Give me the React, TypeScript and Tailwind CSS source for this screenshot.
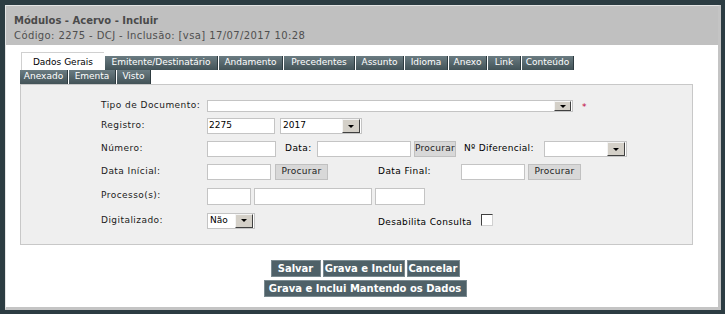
import React from "react";

const font = { fontFamily: '"DejaVu Sans", Verdana, sans-serif' };

function Tab({ label, w, active }: { label: string; w: number; active?: boolean }) {
  if (active) {
    return (
      <div
        className="h-[18px] -mt-[4px] flex items-center justify-center pt-[2px] text-[9px] text-black bg-white border-t border-l border-[#d0d0d0]"
        style={{ width: w }}
      >
        {label}
      </div>
    );
  }
  return (
    <div
      className="h-[14px] flex items-center justify-center text-[9px] text-white bg-gradient-to-b from-[#6b7c82] to-[#435358] border-r border-[#2e3b40]"
      style={{ width: w }}
    >
      {label}
    </div>
  );
}

function Input({ w, value }: { w: number; value?: string }) {
  return (
    <div
      className="h-[16px] bg-white border border-[#c4c4c4] text-[9px] flex items-center pl-[1px] text-black"
      style={{ width: w }}
    >
      {value}
    </div>
  );
}

function DropBtn({ big }: { big?: boolean }) {
  return (
    <div
      className={`${big ? "w-[18px] h-[14px]" : "w-[17px] h-[10px]"} bg-[#d4d0c8] border border-t-[#f4f4f4] border-l-[#f4f4f4] border-r-[#404040] border-b-[#404040] flex items-center justify-center`}
    >
      <div className="w-0 h-0 border-l-[3px] border-r-[3px] border-t-[3px] border-l-transparent border-r-transparent border-t-black" />
    </div>
  );
}

function Select({ w, value, h = 16 }: { w: number; value?: string; h?: number }) {
  return (
    <div
      className="bg-white border border-[#c4c4c4] flex items-center justify-between pl-[2px] pr-[1px] text-[9px] text-black"
      style={{ width: w, height: h }}
    >
      <span>{value}</span>
      <DropBtn big={h > 13} />
    </div>
  );
}

function Btn({ label, w }: { label: string; w: number }) {
  return (
    <div
      className="h-[16px] bg-[#d8d8d8] border border-[#c0c0c0] text-[9px] text-[#222] tracking-[0.3px] flex items-center justify-center overflow-hidden whitespace-nowrap"
      style={{ width: w }}
    >
      {label}
    </div>
  );
}

function Label({ children, w = 106 }: { children: React.ReactNode; w?: number }) {
  return (
    <div className="text-[9px] text-[#1a1a1a] tracking-[0.45px] -mt-[1px] shrink-0" style={{ width: w }}>
      {children}
    </div>
  );
}

function ActionBtn({ label, w }: { label: string; w: number }) {
  return (
    <div
      className="h-[17px] bg-[#4f6168] border border-[#7a8a90] text-white font-bold text-[10px] flex items-center justify-center whitespace-nowrap"
      style={{ width: w }}
    >
      {label}
    </div>
  );
}

export default function App() {
  return (
    <div className="w-[725px] h-[314px] bg-[#2c3c42] pt-[5px] pl-[5px] pr-[4px] pb-[4px]" style={font}>
      <div className="w-full h-full bg-white border-t border-l border-[#e4e4e4] border-r-[3px] border-b-[3px] border-r-[#c4c4c4] border-b-[#c4c4c4] flex flex-col">
        <div className="h-[39px] bg-[#c0c0c0] pl-[8px] pt-[8px] flex flex-col gap-[2px]">
          <div className="text-[10px] font-bold text-[#4a4a4a] leading-[13px]">Módulos - Acervo - Incluir</div>
          <div className="text-[10px] text-[#4f4f4f] leading-[13px] tracking-[0.4px]">
            Código: 2275 - DCJ - Inclusão: [vsa] 17/07/2017 10:28
          </div>
        </div>
        <div className="pl-[14px] pt-[11px] flex flex-col">
          <div className="flex gap-[1px] pl-[1px] items-end h-[14px]">
            <Tab label="Dados Gerais" w={83} active />
            <Tab label="Emitente/Destinatário" w={113} />
            <Tab label="Andamento" w={64} />
            <Tab label="Precedentes" w={71} />
            <Tab label="Assunto" w={48} />
            <Tab label="Idioma" w={43} />
            <Tab label="Anexo" w={38} />
            <Tab label="Link" w={33} />
            <Tab label="Conteúdo" w={52} />
          </div>
          <div className="flex gap-[1px]">
            <Tab label="Anexado" w={48} />
            <Tab label="Ementa" w={47} />
            <Tab label="Visto" w={34} />
          </div>
          <div className="w-[673px] bg-[#efefef] border border-[#c8c8c8] pl-[80px] pt-[15px] pb-[14px] flex flex-col">
            <div className="flex items-center h-[12px]">
              <Label>Tipo de Documento:</Label>
              <Select w={366} h={12} />
              <span className="ml-[9px] mt-[3px] text-[9px] text-[#c0003c]">*</span>
            </div>
            <div className="flex items-center mt-[6px]">
              <Label>Registro:</Label>
              <Input w={68} value="2275" />
              <div className="ml-[5px]">
                <Select w={82} value="2017" />
              </div>
            </div>
            <div className="flex items-center mt-[7px]">
              <Label>Número:</Label>
              <Input w={69} />
              <span className="ml-[9px] w-[32px] text-[9px] tracking-[0.45px]">Data:</span>
              <Input w={94} />
              <div className="ml-[3px]">
                <Btn label="Procurar" w={42} />
              </div>
              <span className="ml-[8px] w-[80px] text-[9px] tracking-[0.3px] -mt-[1px]">Nº Diferencial:</span>
              <Select w={83} />
            </div>
            <div className="flex items-center mt-[7px]">
              <Label>Data Inícial:</Label>
              <Input w={64} />
              <div className="ml-[4px]">
                <Btn label="Procurar" w={53} />
              </div>
              <span className="ml-[50px] w-[83px] text-[9px] tracking-[0.45px] -mt-[1px]">Data Final:</span>
              <Input w={64} />
              <div className="ml-[3px]">
                <Btn label="Procurar" w={53} />
              </div>
            </div>
            <div className="flex items-center mt-[8px]">
              <Label>Processo(s):</Label>
              <div className="flex gap-[3px]">
                <div className="h-[17px] w-[44px] bg-white border border-[#c4c4c4]" />
                <div className="h-[17px] w-[118px] bg-white border border-[#c4c4c4]" />
                <div className="h-[17px] w-[50px] bg-white border border-[#c4c4c4]" />
              </div>
            </div>
            <div className="flex items-center mt-[7px]">
              <Label>Digitalizado:</Label>
              <Select w={48} value="Não" />
              <span className="ml-[123px] text-[9px] tracking-[0.35px] w-[103px] mt-[4px]">Desabilita Consulta</span>
              <div className="w-[12px] h-[12px] -mt-[2px] bg-white border border-t-[#404040] border-l-[#404040] border-r-[#d0d0d0] border-b-[#d0d0d0]" />
            </div>
          </div>
          <div className="flex flex-col items-center gap-[3px] mt-[15px] pr-[8px]">
            <div className="flex gap-[2px]">
              <ActionBtn label="Salvar" w={50} />
              <ActionBtn label="Grava e Inclui" w={82} />
              <ActionBtn label="Cancelar" w={53} />
            </div>
            <ActionBtn label="Grava e Inclui Mantendo os Dados" w={203} />
          </div>
        </div>
      </div>
    </div>
  );
}
